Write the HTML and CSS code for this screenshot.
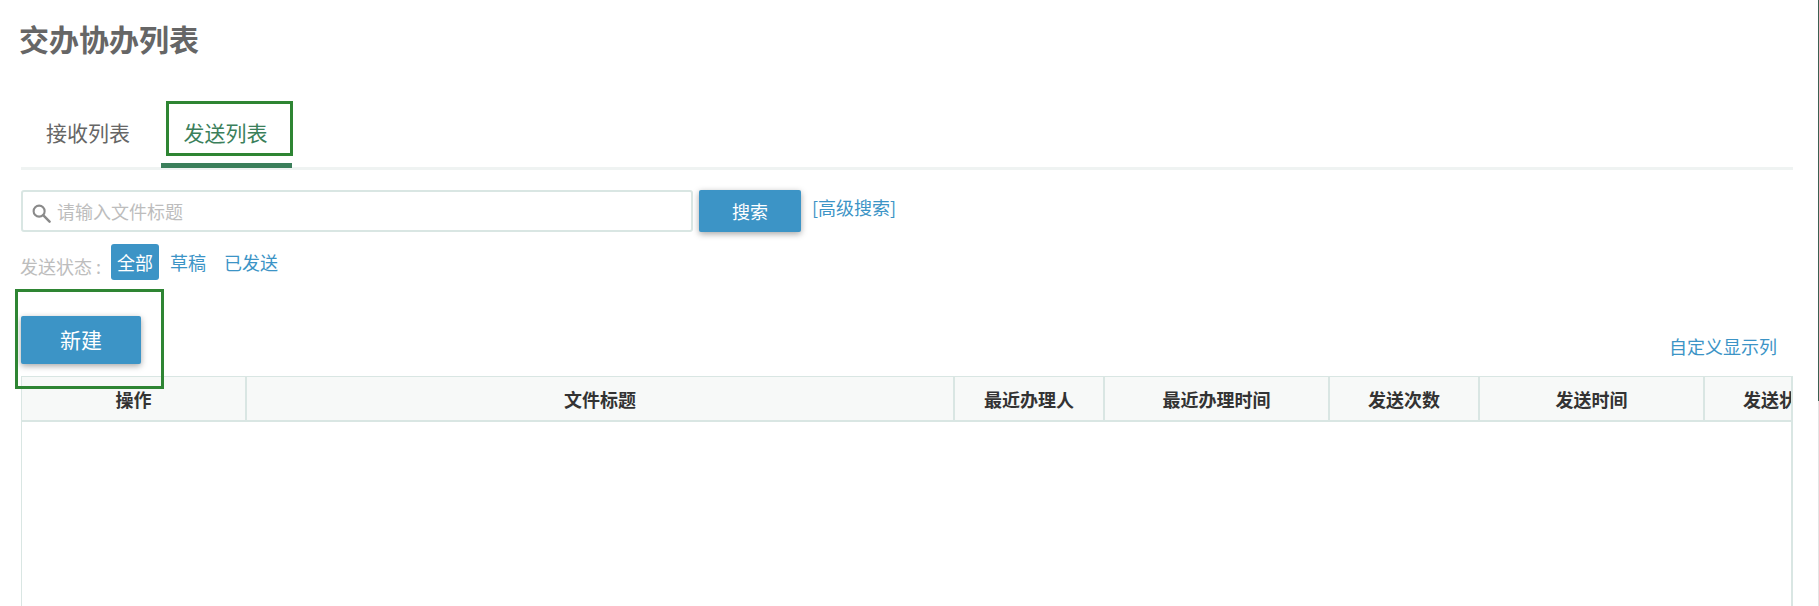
FILE: index.html
```html
<!DOCTYPE html>
<html lang="zh-CN">
<head>
<meta charset="utf-8">
<title>交办协办列表</title>
<link rel="stylesheet" href="styles.css">
</head>
<body>
<div class="edge-line"></div>
<main class="page">
  <h1 class="title">交办协办列表</h1>
  <nav class="tabs">
    <a class="tab">接收列表</a>
    <a class="tab tab-active">发送列表<span class="mark mark-tab"></span></a>
  </nav>
  <form class="search">
    <div class="search-box">
      <svg class="search-icon" viewBox="0 0 20 20" width="19" height="19"><circle cx="7.5" cy="7.5" r="5.8" fill="none" stroke="#8a8a8a" stroke-width="2.2"/><path d="M12 12 L18.5 18.5" stroke="#8a8a8a" stroke-width="2.6" stroke-linecap="round"/></svg>
      <input class="search-input" type="text" placeholder="请输入文件标题">
    </div>
    <button class="btn btn-search" type="button">搜索</button>
    <a class="link link-adv">[高级搜索]</a>
  </form>
  <div class="status">
    <span class="status-label">发送状态 :</span>
    <a class="pill pill-on">全部</a>
    <a class="pill pill-draft">草稿</a>
    <a class="pill">已发送</a>
  </div>
  <div class="toolbar">
    <button class="btn btn-new" type="button">新建<span class="mark mark-new"></span></button>
    <a class="link link-custom">自定义显示列</a>
  </div>
  <section class="grid">
    <div class="grid-head">
      <div class="cell c1">操作</div>
      <div class="cell c2">文件标题</div>
      <div class="cell c3">最近办理人</div>
      <div class="cell c4">最近办理时间</div>
      <div class="cell c5">发送次数</div>
      <div class="cell c6">发送时间</div>
      <div class="cell c7">发送状态</div>
    </div>
  </section>
</main>
</body>
</html>
```
FILE: styles.css
```css
* { box-sizing: border-box; }
html, body { margin: 0; padding: 0; height: 606px; overflow: hidden; background: #fff; }
body { font-family: "Noto Sans CJK SC", "Liberation Sans", sans-serif; font-size: 18px; color: #666; position: relative; }
.edge-line { position: absolute; top: 0; right: 0; width: 1px; height: 606px; background: linear-gradient(#3b5f50 401px, #e4e4e4 401px); }
.page { padding: 0 26px 0 21px; height: 606px; display: flex; flex-direction: column; }
.title { margin: 16px 0 0 -2px; font-size: 30px; line-height: 44px; font-weight: 700; color: #666; height: 44px; }
.tabs { display: flex; flex: none; margin-top: 39px; height: 71px; border-bottom: 3px solid #eff3f2; }
.tab { position: relative; display: block; flex: none; height: 69px; padding-top: 18px; text-align: center; font-size: 21px; line-height: 30px; color: #666; }
.tab:first-child { width: 134px; margin-right: 6px; }
.tab-active { width: 131px; padding-right: 2px; color: #3b7f5b; border-bottom: 5px solid #3b7f5b; }
.mark { position: absolute; border: 3px solid #2e8533; pointer-events: none; }
.mark-tab { left: 5px; top: 2px; width: 127px; height: 55px; }
.search { display: flex; flex: none; align-items: flex-start; margin: 20px 0 0; height: 42px; }
.search-box { position: relative; width: 672px; height: 42px; border: 2px solid #d9e6e3; border-radius: 3px; background: #fff; display: flex; align-items: center; padding-left: 9px; }
.search-icon { flex: none; margin-top: 5px; }
.search-input { flex: 1; border: 0; outline: 0; margin-left: 6px; padding: 0; font: inherit; font-size: 18px; background: transparent; min-width: 0; }
.search-input::placeholder { color: #bdbdbd; opacity: 1; }
.btn { position: relative; border: 0; background: #3c94c6; color: #fff; border-radius: 2px; box-shadow: 0 2px 6px rgba(0,0,0,.35); font-family: inherit; padding: 0; }
.btn-search { width: 102px; height: 42px; margin-left: 6px; font-size: 18px; }
.link { color: #3c94c6; font-size: 18px; line-height: 26px; }
.link-adv { margin: 4px 0 0 11px; }
.status { display: flex; flex: none; align-items: flex-start; height: 36px; margin-top: 12px; }
.status-label { color: #bdbdbd; width: 91px; margin-left: -1px; line-height: 26px; padding-top: 9px; white-space: nowrap; }
.pill { color: #3c94c6; border-radius: 3px; padding: 0 3px; height: 36px; line-height: 36px; margin-left: 8px; margin-right: 5px; }
.pill-on { background: #3c94c6; color: #fff; margin-left: 0; padding: 0 6px; margin-right: 0; }
.pill-draft { margin-right: 12px; }
.pill-draft + .pill { margin-left: 0; }
.toolbar { display: flex; flex: none; justify-content: space-between; align-items: flex-start; height: 60px; margin-top: 36px; }
.btn-new { width: 120px; height: 48px; padding-bottom: 2px; font-size: 21px; }
.mark-new { left: -6px; top: -27px; width: 149px; height: 100px; }
.link-custom { margin: 17px 16px 0 0; }
.grid { flex: 1; border-style: solid; border-color: #d9e6e3; border-width: 1px 2px 0 1px; overflow: hidden; min-height: 0; }
.grid-head { display: flex; width: max-content; height: 45px; background: #f7f9f8; border-bottom: 2px solid #d9e6e3; }
.cell { flex: none; border-right: 2px solid #d9e6e3; text-align: center; font-weight: 700; font-size: 18px; line-height: 45px; height: 43px; color: #333; }
.c1 { width: 225px; }
.c2 { width: 708px; }
.c3 { width: 150px; }
.c4 { width: 225px; }
.c5 { width: 150px; }
.c6 { width: 225px; }
.c7 { width: 148px; border-right: 0; }
```
